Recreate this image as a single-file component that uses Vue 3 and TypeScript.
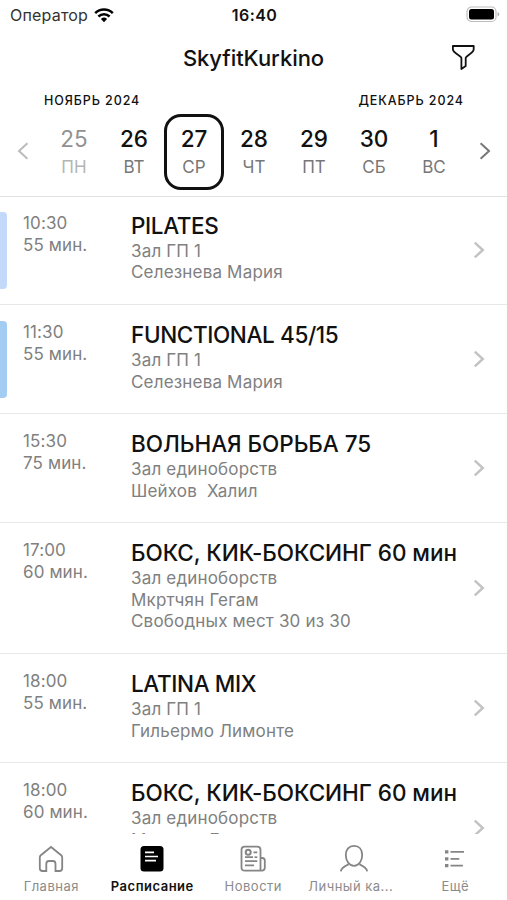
<script setup lang="ts">
interface Day { num: string; name: string; past?: boolean; selected?: boolean }
interface Lesson { time: string; length: string; title: string; lines: string[]; tone?: string; latin?: boolean }
interface Tab { label: string; icon: string; active?: boolean }

const days: Day[] = [
  { num: '25', name: 'ПН', past: true },
  { num: '26', name: 'ВТ' },
  { num: '27', name: 'СР', selected: true },
  { num: '28', name: 'ЧТ' },
  { num: '29', name: 'ПТ' },
  { num: '30', name: 'СБ' },
  { num: '1', name: 'ВС' },
]

const lessons: Lesson[] = [
  { time: '10:30', length: '55 мин.', title: 'PILATES', lines: ['Зал ГП 1', 'Селезнева Мария'], tone: 'light', latin: true },
  { time: '11:30', length: '55 мин.', title: 'FUNCTIONAL 45/15', lines: ['Зал ГП 1', 'Селезнева Мария'], tone: 'deep', latin: true },
  { time: '15:30', length: '75 мин.', title: 'ВОЛЬНАЯ БОРЬБА 75', lines: ['Зал единоборств', 'Шейхов  Халил'] },
  { time: '17:00', length: '60 мин.', title: 'БОКС, КИК-БОКСИНГ 60 мин', lines: ['Зал единоборств', 'Мкртчян Гегам', 'Свободных мест 30 из 30'] },
  { time: '18:00', length: '55 мин.', title: 'LATINA MIX', lines: ['Зал ГП 1', 'Гильермо Лимонте'], latin: true },
  { time: '18:00', length: '60 мин.', title: 'БОКС, КИК-БОКСИНГ 60 мин', lines: ['Зал единоборств', 'Мкртчян Гегам', 'Свободных мест 30 из 30'] },
]

const tabs: Tab[] = [
  { label: 'Главная', icon: 'home' },
  { label: 'Расписание', icon: 'schedule', active: true },
  { label: 'Новости', icon: 'news' },
  { label: 'Личный ка...', icon: 'person' },
  { label: 'Ещё', icon: 'more' },
]
</script>

<template>
  <div class="screen">
    <div class="status">
      <div class="carrier">
        <span>Оператор</span>
        <svg class="wifi" viewBox="0 0 20 15" width="20" height="15">
          <path d="M1.2 5.2a12.6 12.6 0 0 1 17.6 0M4.4 8.5a8 8 0 0 1 11.2 0" fill="none" stroke="#000" stroke-width="2.5" />
          <path d="M6.9 11a4.6 4.6 0 0 1 6.2 0L10 14.2z" fill="#000" />
        </svg>
      </div>
      <span class="clock">16:40</span>
      <svg class="battery" viewBox="0 0 34 18" width="34" height="18">
        <rect x="1" y="1" width="29" height="14.5" rx="4.5" fill="#fff" stroke="#bdbdbd" stroke-width="1.2" />
        <rect x="3" y="3" width="25" height="10.5" rx="2.5" fill="#000" />
        <path d="M31.6 6.1q1.6.8 1.6 2.2t-1.6 2.2z" fill="#aaa" />
      </svg>
    </div>

    <header class="header">
      <h1>SkyfitKurkino</h1>
      <svg class="filter" viewBox="0 0 26 28" width="26" height="28">
        <path d="M2.9 2H23.7V5.2C23.7 9.2 15.7 11.5 15.7 14V22L11.4 25V14C11.4 11.5 2.9 9.2 2.9 5.2Z" fill="none" stroke="#111" stroke-width="1.8" stroke-linejoin="round" />
      </svg>
    </header>

    <section class="calendar">
      <div class="months"><span>НОЯБРЬ 2024</span><span>ДЕКАБРЬ 2024</span></div>
      <div class="week">
        <svg class="arrow prev" viewBox="0 0 12 18" width="12" height="18"><path d="M10.4 1.3 2 9l8.4 7.7" /></svg>
        <div class="days">
          <div v-for="d in days" :key="d.num" class="day" :class="{ past: d.past, selected: d.selected }">
            <span class="num">{{ d.num }}</span>
            <span class="name">{{ d.name }}</span>
          </div>
        </div>
        <svg class="arrow" viewBox="0 0 12 18" width="12" height="18"><path d="M1.6 1.3 10 9l-8.4 7.7" /></svg>
      </div>
    </section>

    <main class="list">
      <article v-for="(l, i) in lessons" :key="i" class="row">
        <div class="mark" :class="l.tone"></div>
        <div class="when"><span>{{ l.time }}</span><span>{{ l.length }}</span></div>
        <div class="info">
          <h2 :class="{ latin: l.latin }">{{ l.title }}</h2>
          <p v-for="line in l.lines" :key="line">{{ line }}</p>
        </div>
        <svg class="chevron" viewBox="0 0 12 18" width="12" height="18"><path d="M1.8 1.6 9.8 9l-8 7.4" /></svg>
      </article>
    </main>

    <nav class="tabs">
      <div v-for="t in tabs" :key="t.icon" class="tab" :class="[t.icon, { active: t.active }]">
        <svg viewBox="0 0 30 30" width="30" height="30">
          <path v-if="t.icon === 'home'" d="M15 3 4.8 11.2Q3.8 12 3.8 13.4V24.3Q3.8 27 6.5 27H10.3V20Q10.3 17 13 17H17Q19.5 17 19.5 20V27H23.5Q26.2 27 26.2 24.3V13.4Q26.2 12 25.2 11.2Z" />
          <g v-else-if="t.icon === 'schedule'">
            <rect x="3.5" y="2" width="23" height="25.5" rx="3.5" fill="#000" stroke="none" />
            <path d="M8 8.4h9M8 12.5h13M8 16.7h11" stroke="#fff" stroke-width="1.7" />
          </g>
          <g v-else-if="t.icon === 'news'">
            <path d="M22.5 26.7H6.8Q3.5 26.7 3.5 23.4V6Q3.5 2.7 6.8 2.7H19.2Q22.5 2.7 22.5 6V26.7ZM22.5 14H24.2Q26.8 14 26.8 16.6V23.5Q26.8 26.7 23.8 26.7H22.5" />
            <circle cx="10.2" cy="8.2" r="2.5" stroke-width="2" />
            <path d="M15.5 8.4h3.8M7 13.2h8M7 17.2h12.3M7 21.4h9" stroke-width="1.7" />
            <path d="M16.5 13.2h2.8" stroke-width="1.7" />
          </g>
          <path v-else-if="t.icon === 'person'" d="M15 1.8C20 1.8 23.2 5.4 23.2 11S20 21.8 15 21.8 6.8 16.6 6.8 11 10 1.8 15 1.8ZM1.8 27.4C2.4 23.8 5.2 22.2 9.5 20.4M28.2 27.4C27.6 23.8 24.8 22.2 20.5 20.4" />
          <g v-else>
            <path d="M10.5 7.9h13.5M10.5 14.9h8.8M10.5 21.7h12.4" />
            <path d="M5 7.9h3.4M5 14.9h3.4M5 21.7h3.4" stroke-width="3.2" />
          </g>
        </svg>
        <span>{{ t.label }}</span>
      </div>
    </nav>
  </div>
</template>

<style>
body { background: #fff; overflow: hidden; }
</style>

<style scoped>
.screen {
  width: 507px;
  height: 900px;
  display: flex;
  flex-direction: column;
  overflow: hidden;
  background: #fff;
  color: #111;
  font-family: Inter, "Liberation Sans", sans-serif;
}
.status {
  height: 30px;
  display: grid;
  grid-template-columns: 1fr auto 1fr;
  align-items: center;
  padding: 0 7px 0 10px;
  box-sizing: border-box;
  font-size: 16px;
}
.carrier { display: flex; align-items: center; gap: 6px; color: #333; letter-spacing: 0.2px; }
.clock { font-weight: 600; letter-spacing: 0.4px; margin-right: 1px; }
.battery { justify-self: end; }
.header {
  height: 56px;
  display: grid;
  grid-template-columns: 1fr auto 1fr;
  align-items: center;
  padding-right: 31px;
  padding-left: 31px;
  box-sizing: border-box;
}
h1 { grid-column: 2; margin: 0; font-size: 22px; line-height: 28px; font-weight: 500; letter-spacing: -0.05px; }
.filter { justify-self: end; }
.calendar { height: 110px; flex: none; border-bottom: 1px solid #e2e2e2; box-sizing: content-box; }
.months {
  display: flex;
  justify-content: space-between;
  padding: 7px 43px 0 44px;
  font-size: 12.5px;
  line-height: 16px;
  font-weight: 500;
  letter-spacing: 0.92px;
}
.week { display: flex; align-items: center; justify-content: space-between; padding: 5px 16px 0 17px; }
.days { display: flex; }
.day {
  width: 60px;
  height: 76px;
  box-sizing: border-box;
  display: flex;
  flex-direction: column;
  align-items: center;
  padding-top: 10px;
  border: 0 solid #111;
}
.day.selected { border-width: 3px; border-radius: 17px; padding-top: 7px; }
.num { font-size: 22.5px; line-height: 30px; font-weight: 500; }
.name { font-size: 17px; line-height: 26px; color: #777; }
.past .num { color: #929292; font-weight: 400; }
.past .name { color: #b5b5b5; }
.arrow { margin-top: -2px; }
.arrow path { fill: none; stroke: #777; stroke-width: 2; }
.prev path { stroke: #bbb; }
.list { height: 638px; margin-top: -0.8px; flex: none; overflow: hidden; }
.row {
  display: flex;
  align-items: flex-start;
  padding: 15.8px 22px 20.8px 0;
  border-bottom: 1px solid #e8e8e8;
}
.mark { width: 7px; height: 77px; margin: 0 16px -6px 0; border-radius: 0 4px 4px 0; }
.mark.light { background: #c3d9fa; }
.mark.deep { background: #a3ccf3; }
.when { width: 108px; flex: none; display: flex; flex-direction: column; padding-top: 0.9px; font-size: 17px; line-height: 21.8px; letter-spacing: 0.12px; color: #808080; }
.info { flex: 1; white-space: pre; }
h2 { margin: 0 0 1.7px; font-size: 22.5px; line-height: 27px; font-weight: 500; letter-spacing: -0.04px; }
h2.latin { letter-spacing: -0.38px; }
p { margin: 0; font-size: 17px; line-height: 21.75px; letter-spacing: 0.18px; color: #808080; }
p:last-child { margin-bottom: -0.7px; }
.chevron { align-self: center; margin-top: 5px; flex: none; }
.chevron path { fill: none; stroke: #c2c2c2; stroke-width: 2.4; }
.tabs { flex: 1; display: grid; grid-template-columns: repeat(5, 101px); padding: 9.8px 0 0 0.8px; background: #fff; }
.tab { display: flex; flex-direction: column; align-items: center; color: #8b8b8b; font-size: 13px; line-height: 18px; letter-spacing: 0.5px; gap: 3px; white-space: nowrap; }
.tab svg { fill: none; stroke: #858585; stroke-width: 1.8; }
.tab.active { color: #111; font-weight: 600; }
.tab.person span { margin-right: 7px; }
</style>
